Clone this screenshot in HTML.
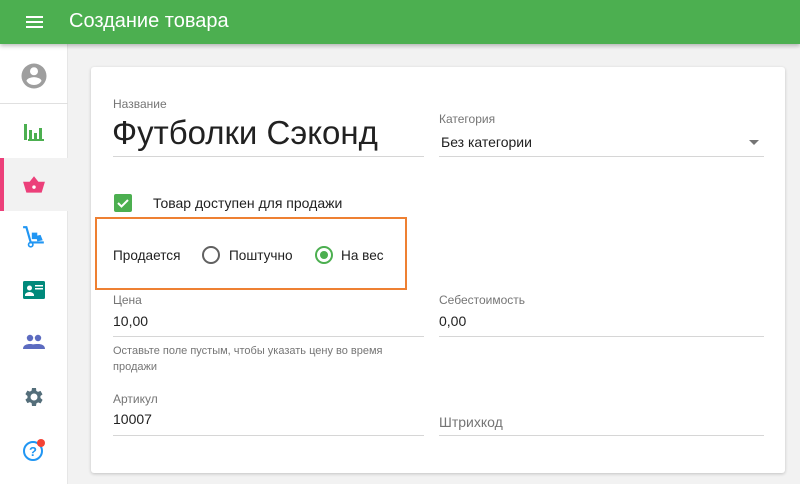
<!DOCTYPE html>
<html><head><meta charset="utf-8"><style>
*{margin:0;padding:0;box-sizing:border-box}
body{width:800px;height:484px;overflow:hidden;background:#f2f2f2;font-family:"Liberation Sans",Roboto,sans-serif;position:relative;color:#212121}
.hdr{position:absolute;left:0;top:0;width:800px;height:44px;background:#4caf50;box-shadow:0 2px 4px rgba(0,0,0,.25);z-index:2}
.hdr .t{position:absolute;left:69px;top:10px;color:#fff;font-size:20px}
.burger{position:absolute;left:26px;top:16px;width:17px;height:12px;border-top:2px solid #fff;border-bottom:2px solid #fff}
.burger:after{content:"";position:absolute;left:0;top:3px;width:17px;height:2px;background:#fff}
.side{position:absolute;left:0;top:44px;width:68px;height:440px;background:#fff;border-right:1px solid #e6e6e6}
.ic{position:absolute;left:0;width:68px;height:52px;display:flex;align-items:center;justify-content:center}
.card{position:absolute;left:91px;top:67px;width:694px;height:406px;background:#fff;border-radius:3px;box-shadow:0 1px 3px rgba(0,0,0,.2)}
.lbl{position:absolute;font-size:12px;color:#757575}
.val{position:absolute;font-size:15px;color:#212121}
.line{position:absolute;height:1px;background:#d6d6d6}
</style></head><body>
<div class="hdr"><div class="burger"></div><div class="t">Создание товара</div></div>
<div class="side">
 <div class="ic" style="top:4px;height:56px;border-bottom:1px solid #e0e0e0"><svg width="30" height="30" viewBox="0 0 24 24"><path fill="#9e9e9e" d="M12 2a10 10 0 100 20 10 10 0 000-20zm0 3a3.2 3.2 0 110 6.4A3.2 3.2 0 0112 5zm0 14.2a7.2 7.2 0 01-6-3.2c0-2 4-3.1 6-3.1s6 1.1 6 3.1a7.2 7.2 0 01-6 3.2z"/></svg></div>
 <div class="ic" style="top:62px"><svg width="22" height="20" viewBox="0 0 22 20"><path fill="#4caf50" d="M1 2h3v16H1zM5 17h16v2H5zM6 8h3v9H6zM11 11h3v6h-3zM16 6h3v11h-3z"/></svg></div>
 <div class="ic" style="top:114px;background:#f2f2f2;height:53px"><div style="position:absolute;left:0;top:0;width:4px;height:53px;background:#ec407a"></div><svg width="24" height="22" viewBox="0 0 22 20"><path fill="#ec407a" d="M7 7l4-5 4 5zM1 7h20l-3 10H4z"/><circle cx="11" cy="12" r="1.6" fill="#fff"/></svg></div>
 <div class="ic" style="top:167px"><svg width="24" height="24" viewBox="0 0 22 22"><path fill="none" stroke="#2196f3" stroke-width="2" d="M1 2h3l4 14h12"/><circle cx="8" cy="18" r="2" fill="none" stroke="#2196f3" stroke-width="1.5"/><path fill="#2196f3" d="M9 7h5v6H9zM13 10l4-1 2 5-5 1z"/></svg></div>
 <div class="ic" style="top:220px"><svg width="24" height="20" viewBox="0 0 24 20"><rect x="1" y="1" width="22" height="18" rx="1.5" fill="#00897b"/><circle cx="7.5" cy="8" r="2.5" fill="#fff"/><path fill="#fff" d="M3 15c0-2 3-3 4.5-3s4.5 1 4.5 3v1H3zM13 5h8v1.5h-8zM13 8h8v1.5h-8z"/></svg></div>
 <div class="ic" style="top:272px"><svg width="24" height="16" viewBox="0 0 24 16"><circle cx="8" cy="4" r="3.2" fill="#5c6bc0"/><circle cx="16" cy="4" r="3.2" fill="#5c6bc0"/><path fill="#5c6bc0" d="M1 15c0-4 4-5 7-5s7 1 7 5zM13 15c0-3-1-4-2-4.5 1-.3 3-.5 5-.5 3 0 7 1 7 5z"/></svg></div>
 <div class="ic" style="top:327px"><svg width="24" height="24" viewBox="0 0 24 24"><path fill="#546e7a" d="M19.4 13a7.5 7.5 0 000-2l2.1-1.6-2-3.5-2.5 1a7 7 0 00-1.7-1L15 3h-4l-.4 2.6a7 7 0 00-1.7 1l-2.5-1-2 3.5L6.5 11a7.5 7.5 0 000 2l-2.1 1.6 2 3.5 2.5-1a7 7 0 001.7 1L11 21h4l.4-2.6a7 7 0 001.7-1l2.5 1 2-3.5zM13 15.5a3.5 3.5 0 110-7 3.5 3.5 0 010 7z" transform="translate(-1 0)"/></svg></div>
 <div class="ic" style="top:380px"><svg width="26" height="26" viewBox="0 0 26 26"><circle cx="12" cy="14" r="9" fill="none" stroke="#2196f3" stroke-width="2"/><text x="12" y="19" font-size="13" font-weight="bold" fill="#2196f3" text-anchor="middle" font-family="Liberation Sans">?</text><circle cx="20" cy="6" r="4" fill="#f44336"/></svg></div>
</div>
<div class="card">
 <div class="lbl" style="left:22px;top:30px">Название</div>
 <div class="val" style="left:21px;top:47px;font-size:33px">Футболки Сэконд</div>
 <div class="line" style="left:22px;top:89px;width:311px"></div>
 <div class="lbl" style="left:348px;top:45px">Категория</div>
 <div class="val" style="left:350px;top:67px;font-size:14px">Без категории</div>
 <div style="position:absolute;left:658px;top:73px;border-left:5px solid transparent;border-right:5px solid transparent;border-top:5px solid #757575"></div>
 <div class="line" style="left:348px;top:89px;width:325px"></div>
 <div style="position:absolute;left:23px;top:127px;width:18px;height:18px;background:#4caf50;border-radius:2px"><svg width="18" height="18"><path d="M4 9l3.5 3.5L14 6" fill="none" stroke="#fff" stroke-width="2"/></svg></div>
 <div class="val" style="left:62px;top:128px;font-size:14px">Товар доступен для продажи</div>
 <div style="position:absolute;left:4px;top:150px;width:312px;height:73px;border:2px solid #ee8032"></div>
 <div class="val" style="left:22px;top:181px;font-size:13.6px">Продается</div>
 <div style="position:absolute;left:111px;top:179px;width:18px;height:18px;border:2px solid #616161;border-radius:50%"></div>
 <div class="val" style="left:138px;top:181px;font-size:13.6px">Поштучно</div>
 <div style="position:absolute;left:224px;top:179px;width:18px;height:18px;border:2px solid #4caf50;border-radius:50%"><div style="margin:3px;width:8px;height:8px;background:#4caf50;border-radius:50%"></div></div>
 <div class="val" style="left:250px;top:181px;font-size:13.6px">На вес</div>
 <div class="lbl" style="left:22px;top:226px">Цена</div>
 <div class="val" style="left:22px;top:246px;font-size:14px">10,00</div>
 <div class="line" style="left:22px;top:269px;width:311px"></div>
 <div style="position:absolute;left:22px;top:276px;width:300px;font-size:11px;color:#757575;line-height:16px">Оставьте поле пустым, чтобы указать цену во время продажи</div>
 <div class="lbl" style="left:348px;top:226px">Себестоимость</div>
 <div class="val" style="left:348px;top:246px;font-size:14px">0,00</div>
 <div class="line" style="left:348px;top:269px;width:325px"></div>
 <div class="lbl" style="left:22px;top:325px">Артикул</div>
 <div class="val" style="left:22px;top:344px;font-size:14px">10007</div>
 <div class="line" style="left:22px;top:368px;width:311px"></div>
 <div class="val" style="left:348px;top:347px;font-size:14px;color:#757575">Штрихкод</div>
 <div class="line" style="left:348px;top:368px;width:325px"></div>
</div>
</body></html>
